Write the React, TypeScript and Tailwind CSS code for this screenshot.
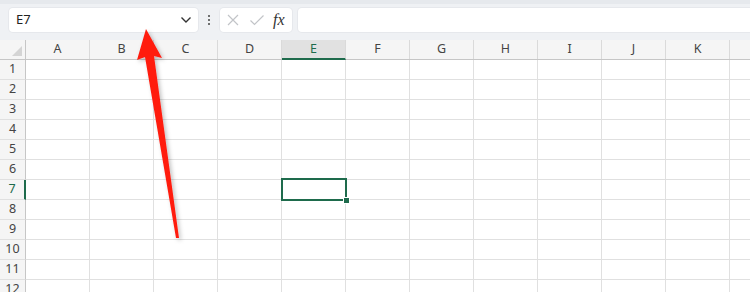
import type React from "react";

const cols = ["A", "B", "C", "D", "E", "F", "G", "H", "I", "J", "K", ""];
const rows = [1, 2, 3, 4, 5, 6, 7, 8, 9, 10, 11, 12];

const Toolbar: React.FC = () => {
  return (
    <div className="h-[40px] bg-[#eff1f4] border-t-[4px] border-[#e6e9ed] flex items-start pt-[4px] pl-[9px] gap-[6px]">
      <div className="w-[189px] h-[24px] bg-white rounded-[4px] flex items-center justify-between pl-[7px] pr-[6px] shadow-[0_0_0_1px_#e6e8ec]">
        <span className="text-[13px] text-[#222]">E7</span>
        <svg width="12" height="8" viewBox="0 0 12 8" fill="none">
          <path d="M1.5 1.5 L6 6 L10.5 1.5" stroke="#333" strokeWidth="1.4" />
        </svg>
      </div>
      <div className="w-[10px] h-[24px] flex flex-col items-center justify-center gap-[2px]">
        <span className="w-[2px] h-[2px] bg-[#444] rounded-full" />
        <span className="w-[2px] h-[2px] bg-[#444] rounded-full" />
        <span className="w-[2px] h-[2px] bg-[#444] rounded-full" />
      </div>
      <div className="w-[72px] h-[24px] bg-white rounded-[4px] flex items-center pl-[6px] shadow-[0_0_0_1px_#e6e8ec]">
        <svg width="14" height="14" viewBox="0 0 14 14" fill="none">
          <path d="M2 2 L12 12 M12 2 L2 12" stroke="#c2c4c8" strokeWidth="1.2" />
        </svg>
        <svg width="16" height="14" viewBox="0 0 16 14" fill="none" className="ml-[9px]">
          <path d="M1.5 7.5 L5.5 11.5 L14.5 2.5" stroke="#c2c4c8" strokeWidth="1.2" />
        </svg>
        <span
          className="ml-[8px] text-[16px] italic text-[#333]"
          style={{ fontFamily: '"Liberation Serif", serif' }}
        >
          fx
        </span>
      </div>
      <div className="flex-1 h-[24px] bg-white rounded-l-[4px] shadow-[0_0_0_1px_#e6e8ec]" />
    </div>
  );
};

const Grid: React.FC = () => {
  return (
    <div className="flex flex-col">
      <div className="flex h-[20px] bg-[#f5f5f5] border-b border-[#c6c6c6]">
        <div className="w-[26px] shrink-0 border-r border-[#c6c6c6] relative">
          <svg width="10" height="10" viewBox="0 0 10 10" className="absolute right-[3px] bottom-[3px]">
            <path d="M10 0 L10 10 L0 10 Z" fill="#d4d4d4" />
          </svg>
        </div>
        {cols.map((c, i) => (
          <div
            key={i}
            className={`w-[64px] shrink-0 flex items-center justify-center text-[12.5px] border-r border-[#dadada] ${
              c === "E"
                ? "bg-[#e1e1e1] text-[#1e6b4c] border-b-2 border-b-[#1e6b4c] -mb-[1px]"
                : "text-[#444]"
            }`}
          >
            {c}
          </div>
        ))}
      </div>
      {rows.map((r) => (
        <div key={r} className="flex h-[20px]">
          <div
            className={`w-[26px] shrink-0 bg-[#f5f5f5] border-b border-[#e0e0e0] flex items-center justify-center text-[12.5px] ${
              r === 7
                ? "bg-[#e1e1e1] text-[#1e6b4c] border-r-2 border-r-[#1e6b4c]"
                : "text-[#444] border-r border-r-[#c6c6c6]"
            }`}
          >
            {r}
          </div>
          {cols.map((c, i) => (
            <div
              key={i}
              className="w-[64px] shrink-0 border-r border-b border-[#e0e0e0] relative"
            >
              {r === 7 && c === "E" && (
                <div className="absolute z-10 -left-[1px] -top-[2px] w-[66px] h-[23px] border-2 border-[#1e6b4c]">
                  <div className="absolute -right-[5px] -bottom-[5px] w-[7px] h-[7px] bg-[#1e6b4c] border border-white" />
                </div>
              )}
            </div>
          ))}
        </div>
      ))}
    </div>
  );
};

export default function App() {
  return (
    <div
      className="relative w-[750px] h-[292px] overflow-hidden bg-white"
      style={{ fontFamily: '"Noto Sans", "Open Sans", sans-serif' }}
    >
      <Toolbar />
      <Grid />
      <svg
        className="absolute inset-0 z-20 pointer-events-none"
        width="750"
        height="292"
        viewBox="0 0 750 292"
      >
        <defs>
          <filter id="sh" x="-50%" y="-50%" width="200%" height="200%">
            <feDropShadow dx="2" dy="2" stdDeviation="2" floodColor="#000" floodOpacity="0.25" />
          </filter>
        </defs>
        <path
          d="M146 29 L162 58 L154 56 L179 238 L176 238 L145 57 L137 60 Z"
          fill="#ff1a0e"
          filter="url(#sh)"
        />
      </svg>
    </div>
  );
}
